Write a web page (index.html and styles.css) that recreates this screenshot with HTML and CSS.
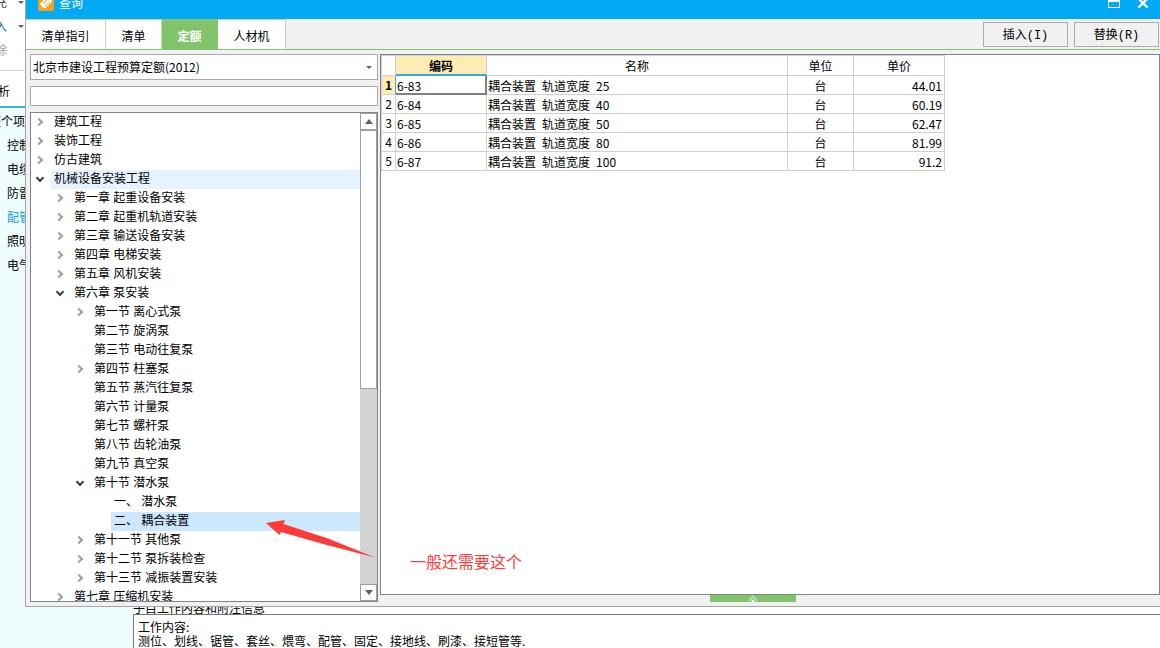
FILE: index.html
```
<!DOCTYPE html>
<html lang="zh-CN">
<head>
<meta charset="utf-8">
<title>查询</title>
<link rel="stylesheet" href="styles.css">
</head>
<body>
<div class="app">
  <aside class="side">
    <div class="ribbon">
      <div class="tool tool-icon">充<svg class="caret" viewBox="0 0 6 3"><path d="M0 0H6L3 3Z"/></svg></div>
      <div class="tool tool-icon accent">入<svg class="caret" viewBox="0 0 6 3"><path d="M0 0H6L3 3Z"/></svg></div>
      <div class="tool tool-icon muted">除</div>
    </div>
    <div class="side-tab">析</div>
    <ul class="side-list">
      <li class="side-root">整个项目</li>
      <li>控制</li>
      <li>电缆</li>
      <li>防雷</li>
      <li class="current">配管</li>
      <li>照明</li>
      <li>电气</li>
    </ul>
  </aside>
  <section class="notes">
    <h2>子目工作内容和附注信息</h2>
    <div class="notes-box">工作内容:<br>测位、划线、锯管、套丝、煨弯、配管、固定、接地线、刷漆、接短管等.</div>
  </section>
</div>

<main class="dialog">
  <header class="titlebar">
    <svg class="logo" viewBox="0 0 16 16"><rect width="16" height="16" rx="2" fill="#f9a01f"/><path d="M2.500 8.500 8.500 3l2 1.500L6 9M6 9l6.500-4.500 1 2L7 13l-3-1.500-1.500-3" fill="#fff" stroke="#fff" stroke-linejoin="round"/><path d="M5 8.500 9 5M7 11l4.500-4" stroke="#f9a01f"/></svg>
    <h1>查询</h1>
    <button class="win" aria-label="最大化"><svg viewBox="0 0 12 12"><path d="M.5 1.5H11.5V10.5H.5Z" fill="none" stroke="#fff"/><path d="M0 1H12V5H0Z" fill="#fff"/></svg></button>
    <button class="win" aria-label="关闭"><svg viewBox="0 0 12 12"><path d="M1.500 1.500 10.500 10.500M10.500 1.500 1.500 10.500" stroke="#fff" stroke-width="2.400"/></svg></button>
  </header>

  <nav class="tabs">
    <button class="tab tab-wide">清单指引</button>
    <button class="tab">清单</button>
    <button class="tab active">定额</button>
    <button class="tab tab-mid">人材机</button>
    <div class="actions">
      <button class="action">插入(I)</button>
      <button class="action">替换(R)</button>
    </div>
  </nav>

  <div class="content">
    <section class="left">
      <div class="combo">
        <select aria-label="定额库"><option>北京市建设工程预算定额(2012)</option></select>
        <svg class="caret" viewBox="0 0 6 3"><path d="M0 0H6L3 3Z"/></svg>
      </div>
      <input class="search" type="text" aria-label="搜索">
      <div class="tree-box">
        <ul class="tree">
          <li><div class="row closed"><span>建筑工程</span></div></li>
          <li><div class="row closed"><span>装饰工程</span></div></li>
          <li><div class="row closed"><span>仿古建筑</span></div></li>
          <li><div class="row open hover"><span>机械设备安装工程</span></div>
            <ul>
              <li><div class="row closed"><span>第一章 起重设备安装</span></div></li>
              <li><div class="row closed"><span>第二章 起重机轨道安装</span></div></li>
              <li><div class="row closed"><span>第三章 输送设备安装</span></div></li>
              <li><div class="row closed"><span>第四章 电梯安装</span></div></li>
              <li><div class="row closed"><span>第五章 风机安装</span></div></li>
              <li><div class="row open"><span>第六章 泵安装</span></div>
                <ul>
                  <li><div class="row closed"><span>第一节 离心式泵</span></div></li>
                  <li><div class="row"><span>第二节 旋涡泵</span></div></li>
                  <li><div class="row"><span>第三节 电动往复泵</span></div></li>
                  <li><div class="row closed"><span>第四节 柱塞泵</span></div></li>
                  <li><div class="row"><span>第五节 蒸汽往复泵</span></div></li>
                  <li><div class="row"><span>第六节 计量泵</span></div></li>
                  <li><div class="row"><span>第七节 螺杆泵</span></div></li>
                  <li><div class="row"><span>第八节 齿轮油泵</span></div></li>
                  <li><div class="row"><span>第九节 真空泵</span></div></li>
                  <li><div class="row open"><span>第十节 潜水泵</span></div>
                    <ul>
                      <li><div class="row"><span>一、 潜水泵</span></div></li>
                      <li><div class="row selected"><span>二、 耦合装置</span></div></li>
                    </ul>
                  </li>
                  <li><div class="row closed"><span>第十一节 其他泵</span></div></li>
                  <li><div class="row closed"><span>第十二节 泵拆装检查</span></div></li>
                  <li><div class="row closed"><span>第十三节 减振装置安装</span></div></li>
                </ul>
              </li>
              <li><div class="row closed"><span>第七章 压缩机安装</span></div></li>
            </ul>
          </li>
        </ul>
        <div class="scroll">
          <button aria-label="向上滚动"><svg viewBox="0 0 8 5"><path d="M4 0 8 5H0Z"/></svg></button>
          <div class="track"><div class="thumb"></div></div>
          <button aria-label="向下滚动"><svg viewBox="0 0 8 5"><path d="M0 0H8L4 5Z"/></svg></button>
        </div>
      </div>
    </section>

    <section class="right">
      <div class="grid-box">
        <table>
          <colgroup><col class="c-no"><col class="c-code"><col class="c-name"><col class="c-unit"><col class="c-price"></colgroup>
          <thead><tr><th></th><th class="picked head-on">编码</th><th>名称</th><th>单位</th><th>单价</th></tr></thead>
          <tbody>
            <tr><th class="picked">1</th><td class="cell-on">6-83</td><td>耦合装置<i> </i>轨道宽度<i> </i>25</td><td class="mid">台</td><td class="num">44.01</td></tr>
            <tr><th>2</th><td>6-84</td><td>耦合装置<i> </i>轨道宽度<i> </i>40</td><td class="mid">台</td><td class="num">60.19</td></tr>
            <tr><th>3</th><td>6-85</td><td>耦合装置<i> </i>轨道宽度<i> </i>50</td><td class="mid">台</td><td class="num">62.47</td></tr>
            <tr><th>4</th><td>6-86</td><td>耦合装置<i> </i>轨道宽度<i> </i>80</td><td class="mid">台</td><td class="num">81.99</td></tr>
            <tr><th>5</th><td>6-87</td><td>耦合装置<i> </i>轨道宽度<i> </i>100</td><td class="mid">台</td><td class="num">91.2</td></tr>
          </tbody>
        </table>
      </div>
      <button class="expander" aria-label="展开"><svg viewBox="0 0 10 7"><path d="M1 6 5 1 9 6" fill="none" stroke="#c4e4bb" stroke-width="1.500"/><path d="M3 7 5 4 7 7Z" fill="#fff"/></svg></button>
    </section>
  </div>
</main>

<svg class="arrow" viewBox="0 0 110 40"><path d="M0 4 19 1 17.500 5 62 19.500 109 38.500 59 25.500 15 13 13.500 16Z" fill="#ff3b38"/></svg>
<p class="remark">一般还需要这个</p>
</body>
</html>
```
FILE: styles.css
```
*, *::before { box-sizing: border-box; }
body {
  margin: 0;
  height: 100vh;
  overflow: hidden;
  position: relative;
  font: 12px/14px "Noto Sans CJK SC", sans-serif;
  color: #000;
  background: #fff;
}
ul { list-style: none; margin: 0; padding: 0; }
h1, h2, p { margin: 0; font-size: 12px; font-weight: 400; }
button, input, select { font: inherit; color: inherit; margin: 0; padding: 0; border: 0; border-radius: 0; }
svg { display: block; }
.caret { width: 6px; height: 3px; fill: #5c6070; }

/* main window behind the dialog */
.app { display: flex; height: 100%; }
.side { flex: 0 0 133px; background: #f0fdff; }
.ribbon { height: 71px; overflow: hidden; background: #fff; border-bottom: 1px solid #d5d5d5; }
.tool { display: flex; align-items: center; gap: 11px; height: 24px; margin-left: -5px; color: #444a5a; }
.tool:first-child { margin-top: -10px; }
.accent { color: #1b6fa8; }
.muted { color: #a0a0a0; }
.side-tab { height: 37px; padding-top: 13px; margin-left: -2px; background: #fff; border-bottom: 2px solid #35b3e2; }
.side-list { padding-top: 1px; line-height: 24px; }
.side-list li { padding-left: 7px; }
.side-list .side-root { padding: 0; margin-left: -11px; }
.side-list .current { color: #0fa5dc; }
.notes { flex: 1; display: flex; flex-direction: column; justify-content: flex-end; min-width: 0; }
.notes h2 { line-height: 12px; }
.notes-box { height: 34px; padding: 5px 4px 0; border: 1px solid #777; border-width: 1px 0 0 1px; white-space: nowrap; }

/* dialog */
.dialog {
  position: absolute;
  inset: 0 0 41px 25px;
  display: flex;
  flex-direction: column;
  overflow: hidden;
  background: #f1f1f1;
  border: 1px solid #a5a5a5;
  border-width: 0 0 1px 1px;
}
.titlebar { flex: none; display: flex; align-items: center; height: 32px; margin-top: -13px; padding: 0 6px 0 12px; background: #03a9f4; color: #fff; }
.logo { width: 16px; height: 16px; margin-right: 5px; }
.titlebar h1 { flex: 1; }
.win { width: 22px; height: 20px; margin-left: 7px; background: none; display: grid; place-items: center; }
.win svg { width: 12px; height: 12px; }

.tabs { flex: none; display: flex; height: 31px; border-bottom: 1px solid #82c46c; }
.tab { width: 56px; background: #fff; border-top: 1px solid #b5dfa8; border-right: 1px solid #b5dfa8; padding-top: 2px; }
.tab-wide { width: 80px; }
.tab-mid { width: 68px; }
.tab.active { background: #82c46c; border-color: #82c46c; color: #fff; font-weight: 700; }
.actions { display: flex; gap: 6px; margin-left: auto; padding: 3px 1px 2px 0; }
.action { width: 85px; padding-top: 2px; background: #f1f1f1; border: 1px solid #adadad; font-family: "Liberation Mono", "Noto Sans CJK SC", monospace; }

.content { flex: 1; display: flex; gap: 2px; min-height: 0; padding: 4px 0 4px 4px; }
.left { flex: 0 0 348px; display: flex; flex-direction: column; gap: 6px; min-height: 0; }
.combo { display: grid; align-items: center; height: 26px; flex: none; background: #fff; border: 1px solid #a9a9a9; }
.combo select { grid-area: 1 / 1; width: 100%; height: 24px; padding-left: 2px; appearance: none; background: none; }
.combo .caret { grid-area: 1 / 1; justify-self: end; margin-right: 5px; pointer-events: none; }
.search { flex: none; height: 20px; padding: 0 3px; background: #fff; border: 1px solid #a9a9a9; }
.tree-box { flex: 1; display: flex; min-height: 0; background: #fff; border: 1px solid #7f838c; }
.tree { flex: 1; overflow: hidden; font-family: "Liberation Sans", "Noto Sans CJK SC", sans-serif; }
.tree ul { margin-left: 20px; }
.row { display: flex; height: 19px; line-height: 18px; padding-left: 20px; position: relative; }
.row span { flex: 1; padding-left: 3px; }
.hover span { background: #e5f3ff; }
.selected span { background: #cce8ff; }
.closed::before, .open::before { content: ""; position: absolute; width: 6px; height: 6px; top: 6px; left: 5px; border: solid #a0a0a0; border-width: 2px 2px 0 0; transform: rotate(45deg); }
.open::before { top: 5px; left: 6px; border-color: #404040; transform: rotate(135deg); }
.scroll { flex: 0 0 17px; display: flex; flex-direction: column; background: #d3d3d3; }
.scroll button { flex: 0 0 17px; display: grid; place-items: center; background: #fff; border: 1px solid #a0a0a0; }
.scroll svg { width: 8px; height: 5px; fill: #5c6070; }
.track { flex: 1; }
.thumb { height: 57%; background: #fff; border: 1px solid #a0a0a0; }

.right { flex: 1; display: flex; flex-direction: column; min-width: 0; }
.grid-box { flex: 1; background: #fff; border: 1px solid #7f838c; }
.expander { width: 86px; height: 7px; margin: 0 0 0 330px; background: #82c46c; display: grid; place-items: center; }
.expander svg { width: 10px; height: 7px; }
table { border-collapse: collapse; table-layout: fixed; width: 564px; }
.c-no { width: 14px; }
.c-code { width: 91px; }
.c-name { width: 301px; }
.c-unit { width: 66px; }
.c-price { width: 91px; }
th, td { height: 19px; padding: 1px 2px 0 1px; border: 1px solid #d0d0d0; font-weight: 400; text-align: left; white-space: nowrap; }
th { padding: 0; text-align: center; }
thead th { height: 20px; }
.picked { background: #ffecb3; font-weight: 700; }
.head-on { box-shadow: inset 0 -1px #35a8dc; border-bottom-color: #35a8dc; }
tbody .picked { border-right-color: #35a8dc; }
.cell-on { border-color: #35a8dc #808080 #808080 #35a8dc; box-shadow: inset -1px -1px #808080; }
td.mid { padding: 1px 0 0; text-align: center; }
td.num { padding-right: 2px; text-align: right; }
td i { font: 10px/1px "Liberation Mono", monospace; white-space: pre; }

/* annotation drawn over the window */
.arrow { position: absolute; left: 266px; top: 519px; width: 110px; height: 40px; }
.remark { position: absolute; left: 410px; top: 551px; font-size: 16px; line-height: 20px; color: #ff3b38; }
```
